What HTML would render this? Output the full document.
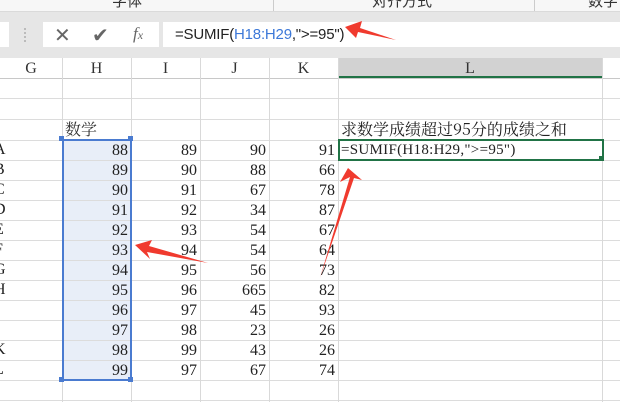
<!DOCTYPE html>
<html><head><meta charset="utf-8"><style>
body{margin:0;width:620px;height:402px;overflow:hidden;background:#fff;position:relative;font-family:"Liberation Serif","Noto Serif CJK SC",serif}
.a{position:absolute}
.vl{position:absolute;width:1px;background:#d9d9d9;top:58px;height:344px}
.hl{position:absolute;height:1px;background:#dcdcdc;left:0;width:620px}
.n{position:absolute;font-size:16px;color:#222;text-align:right;height:20px;line-height:21px}
.ch{position:absolute;top:58px;height:20px;line-height:21px;text-align:center;font-size:16px;color:#333}
</style></head><body>
<div class="a" style="left:0;top:0;width:620px;height:58px;background:#e6e6e6"></div>
<div class="a" style="left:0;top:0;width:620px;height:11px;background:#f7f7f7;border-bottom:1px solid #dadada"></div>
<div class="a" style="left:273px;top:0;width:1px;height:11px;background:#ccc"></div>
<div class="a" style="left:534px;top:0;width:1px;height:11px;background:#ccc"></div>
<div class="a" style="left:112px;top:-10px;font:15px 'Noto Sans CJK SC',sans-serif;color:#333">字体</div>
<div class="a" style="left:372px;top:-10px;font:15px 'Noto Sans CJK SC',sans-serif;color:#333">对齐方式</div>
<div class="a" style="left:588px;top:-10px;font:15px 'Noto Sans CJK SC',sans-serif;color:#333">数字</div>
<div class="a" style="left:0;top:22px;width:9px;height:25px;background:#fff"></div>
<div class="a" style="left:24px;top:28px;width:2px;height:14px;border-left:2px dotted #bbb"></div>
<div class="a" style="left:43px;top:22px;width:116px;height:25px;background:#fff"></div>
<div class="a" style="left:54px;top:23px;font:20px 'Liberation Sans',sans-serif;color:#666">✕</div>
<div class="a" style="left:92px;top:23px;font:20px 'DejaVu Sans',sans-serif;color:#666">✔</div>
<div class="a" style="left:133px;top:24px;font:italic 17px 'Liberation Serif',serif;color:#666">f<span style="font-size:12px">x</span></div>
<div class="a" style="left:163px;top:22px;width:457px;height:25px;background:#fff"></div>
<div class="a" style="left:175px;top:26px;font:15px 'Liberation Sans',sans-serif;color:#222;letter-spacing:-0.2px">=SUMIF(<span style="color:#3c78d8">H18:H29</span>,"&gt;=95")</div>
<div class="a" style="left:338px;top:58px;width:264px;height:20px;background:#d2d2d2;border-bottom:2px solid #217346;box-sizing:border-box"></div>
<div class="a" style="left:62px;top:140px;width:69px;height:240px;background:#e8eef8"></div>
<div class="hl" style="top:78px;background:#c8c8c8"></div>
<div class="hl" style="top:98px"></div><div class="hl" style="top:119px"></div>
<div class="hl" style="top:140px"></div><div class="hl" style="top:160px"></div><div class="hl" style="top:180px"></div><div class="hl" style="top:200px"></div><div class="hl" style="top:220px"></div><div class="hl" style="top:240px"></div><div class="hl" style="top:260px"></div><div class="hl" style="top:280px"></div><div class="hl" style="top:300px"></div><div class="hl" style="top:320px"></div><div class="hl" style="top:340px"></div><div class="hl" style="top:360px"></div><div class="hl" style="top:380px"></div><div class="hl" style="top:400px"></div>
<div class="vl" style="left:62px"></div><div class="vl" style="left:131px"></div><div class="vl" style="left:200px"></div><div class="vl" style="left:269px"></div><div class="vl" style="left:338px"></div><div class="vl" style="left:602px"></div>
<div class="ch" style="left:0;width:62px">G</div><div class="ch" style="left:62px;width:69px">H</div><div class="ch" style="left:131px;width:69px">I</div><div class="ch" style="left:200px;width:69px">J</div><div class="ch" style="left:269px;width:69px">K</div><div class="ch" style="left:338px;width:264px">L</div>
<div class="a" style="left:65px;top:119px;font:16px 'Noto Serif CJK SC',serif;color:#333;line-height:20px">数学</div>
<div class="a" style="left:341px;top:119px;font:16px 'Noto Serif CJK SC',serif;color:#222;line-height:20px">求数学成绩超过95分的成绩之和</div>
<div class="a" style="left:62px;top:139px;width:66px;height:238px;border:2px solid #4a7bd0"></div>
<div class="a" style="left:59px;top:136px;width:5px;height:5px;background:#4a7bd0"></div><div class="a" style="left:128px;top:136px;width:5px;height:5px;background:#4a7bd0"></div><div class="a" style="left:59px;top:377px;width:5px;height:5px;background:#4a7bd0"></div><div class="a" style="left:128px;top:377px;width:5px;height:5px;background:#4a7bd0"></div>
<div class="a" style="left:338px;top:139px;width:262px;height:18px;border:2px solid #217346;background:#fff"></div>
<div class="a" style="left:599px;top:156px;width:4px;height:4px;background:#217346"></div>
<div class="a" style="left:341px;top:140px;font:15px 'Liberation Serif',serif;color:#222;line-height:21px;letter-spacing:0.3px">=SUMIF(H18:H29,"&gt;=95")</div>
<div id="d"></div>
<div class="a" style="left:0;top:140px;font-size:16px;line-height:20px;color:#222;margin-left:-6px">A<br>B<br>C<br>D<br>E<br>F<br>G<br>H<br>I<br><span style="color:#3c78d8">J</span><br>K<br>L</div>
<script>
var H=[88,89,90,91,92,93,94,95,96,97,98,99],I=[89,90,91,92,93,94,95,96,97,98,99,97],J=[90,88,67,34,54,54,56,665,45,23,43,67],K=[91,66,78,87,67,64,73,82,93,26,26,74];
var s="";[[H,62],[I,131],[J,200],[K,269]].forEach(function(c){c[0].forEach(function(v,i){s+='<div class="n" style="left:'+c[1]+'px;width:66px;top:'+(140+i*20)+'px">'+v+'</div>'})});
document.getElementById('d').innerHTML=s;
</script>
<svg class="a" style="left:0;top:0" width="620" height="402">
<polygon points="345,27 362,21 360,28 396,40 358,32 356,38" fill="#f03a2e"/>
<polygon points="135,245 152,240 149,246 208,263 147,252 150,259" fill="#f03a2e"/>
<polygon points="348,168 362,180 354,178 320,278 350,177 340,182" fill="#f03a2e"/>
</svg>
</body></html>
